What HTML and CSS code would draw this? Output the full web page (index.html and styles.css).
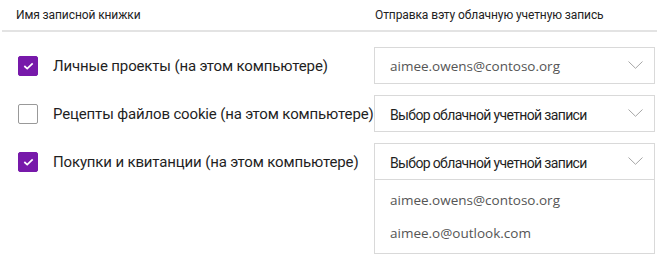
FILE: index.html
```html
<!DOCTYPE html>
<html lang="ru">
<head>
    <meta charset="UTF-8">
    <title>Отправка записных книжек</title>
    <link rel="stylesheet" href="styles.css">
</head>
<body>

<div class="header">
    <span class="col-name">Имя записной книжки</span>
    <span class="col-dest">Отправка вэту облачную учетную запись</span>
</div>

<div class="list">
    <div class="row">
        <label class="notebook">
            <span class="check checked">
                <svg width="11" height="8" viewBox="0 0 11 8"><path d="M1.3 4 L4.2 6.6 L9.7 1.3" fill="none" stroke="#fff" stroke-width="1.7"/></svg>
            </span>
            Личные проекты (на этом компьютере)
        </label>
        <div class="select">
            <div class="select-head">
                <span class="select-value email">aimee.owens@contoso.org</span>
                <svg class="chevron" width="15" height="8" viewBox="0 0 15 8"><path d="M0.5 0.5 L7.5 7.3 L14.5 0.5" fill="none" stroke="#a6a6a6" stroke-width="1"/></svg>
            </div>
        </div>
    </div>

    <div class="row">
        <label class="notebook">
            <span class="check"></span>
            Рецепты файлов cookie (на этом компьютере)
        </label>
        <div class="select">
            <div class="select-head">
                <span class="select-value">Выбор облачной учетной записи</span>
                <svg class="chevron" width="15" height="8" viewBox="0 0 15 8"><path d="M0.5 0.5 L7.5 7.3 L14.5 0.5" fill="none" stroke="#a6a6a6" stroke-width="1"/></svg>
            </div>
        </div>
    </div>

    <div class="row">
        <label class="notebook">
            <span class="check checked">
                <svg width="11" height="8" viewBox="0 0 11 8"><path d="M1.3 4 L4.2 6.6 L9.7 1.3" fill="none" stroke="#fff" stroke-width="1.7"/></svg>
            </span>
            Покупки и квитанции (на этом компьютере)
        </label>
        <div class="select open">
            <div class="select-head">
                <span class="select-value">Выбор облачной учетной записи</span>
                <svg class="chevron" width="15" height="8" viewBox="0 0 15 8"><path d="M0.5 0.5 L7.5 7.3 L14.5 0.5" fill="none" stroke="#a6a6a6" stroke-width="1"/></svg>
            </div>
            <div class="options">
                <div class="option email">aimee.owens@contoso.org</div>
                <div class="option email">aimee.o@outlook.com</div>
            </div>
        </div>
    </div>
</div>

</body>
</html>
```
FILE: styles.css
```css
:root {
    --purple: #7719aa;
    --lineColor: #d9d9d9;
    --textColor: #1f1f1f;
    --mutedColor: #555;
}

body {
    font-family: Roboto, "Noto Sans", sans-serif;
    background-color: #fff;
    color: var(--textColor);
    margin: 0;
    padding: 0;
}

/* Kolomkoppen */
.header {
    display: grid;
    grid-template-columns: 372px 1fr;
    height: 30px;
    margin: 0 3px 0 2px;
    border-bottom: 2px solid #e3e3e3;
    align-items: center;
    font-size: 12px;
    letter-spacing: -0.1px;
    color: #222;
}

.col-name {
    padding-left: 14px;
}

.col-dest {
    padding-left: 1px;
}

.list {
    display: flex;
    flex-direction: column;
    gap: 11px;
    margin-top: 15px;
}

.row {
    display: grid;
    grid-template-columns: 374px 281px;
    align-items: start;
}

/* Checkbox + naam */
.notebook {
    display: flex;
    align-items: center;
    gap: 15px;
    height: 37px;
    padding-left: 18px;
    font-size: 15px;
    letter-spacing: -0.15px;
    white-space: nowrap;
}

.check {
    flex: none;
    display: flex;
    align-items: center;
    justify-content: center;
    width: 18px;
    height: 18px;
    border: 1px solid #999;
    border-radius: 2px;
    background: #fff;
}

.check.checked {
    background: var(--purple);
    border-color: var(--purple);
}

/* Dropdown */
.select {
    border: 1px solid var(--lineColor);
    background: #fff;
}

.select-head {
    display: flex;
    align-items: center;
    justify-content: space-between;
    height: 35px;
    padding: 0 11px 0 15px;
    font-size: 14px;
    letter-spacing: -0.65px;
}

.select-value {
    padding-top: 3px;
}

.chevron {
    margin-top: -2px;
}

.email {
    font-family: "Open Sans", sans-serif;
    font-size: 13.5px;
    letter-spacing: 0;
    color: var(--mutedColor);
}

.select-value.email {
    padding-top: 0;
}

.select.open .select-head {
    border-bottom: 1px solid var(--lineColor);
}

.options {
    padding: 4px 0 3px;
}

.option {
    height: 33px;
    line-height: 33px;
    padding-left: 15px;
}
```
